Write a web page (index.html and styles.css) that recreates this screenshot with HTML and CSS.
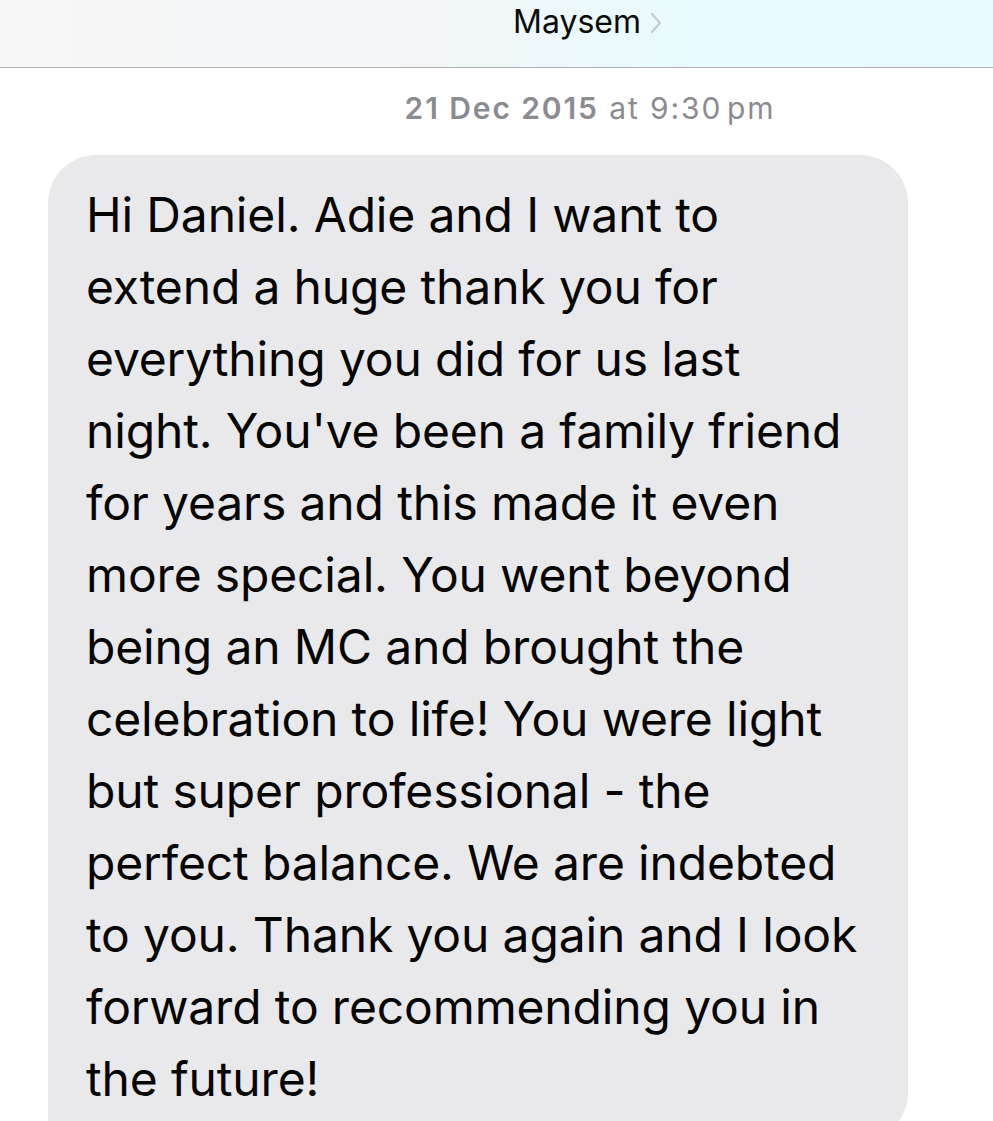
FILE: index.html
```html
<!DOCTYPE html>
<html>
<head>
<meta charset="utf-8">
<link rel="stylesheet" href="styles.css">
</head>
<body>
<header class="nav">
  <div class="contact">Maysem<svg class="chev" width="12" height="22" viewBox="0 0 12 22"><path d="M2 2 L10 11 L2 20" fill="none" stroke="#c4c8cc" stroke-width="2" stroke-linecap="round" stroke-linejoin="round"/></svg></div>
</header>
<main class="thread">
  <div class="stamp"><b>21 Dec 2015</b> at 9:30&#8202;pm</div>
  <div class="bubble"><p class="msg">Hi Daniel. Adie and I want to<br>extend a huge thank you for<br>everything you did for us last<br>night. You've been a family friend<br>for years and this made it even<br>more special. You went beyond<br>being an MC and brought the<br>celebration to life! You were light<br>but super professional - the<br>perfect balance. We are indebted<br>to you. Thank you again and I look<br>forward to recommending you in<br>the future!</p></div>
</main>
</body>
</html>
```
FILE: styles.css
```css
html, body {
  margin: 0;
  padding: 0;
  background: #ffffff;
  font-family: Inter, "Liberation Sans", sans-serif;
  overflow: hidden;
}
.nav {
  height: 68px;
  box-sizing: border-box;
  border-bottom: 1.5px solid #b3b3b3;
  background: linear-gradient(90deg, #f6f6f7 0%, #f3f5f6 40%, #e8fafd 70%, #e6fbfd 100%);
  display: flex;
  justify-content: center;
  padding-left: 182px;
}
.contact {
  display: flex;
  align-items: flex-start;
  gap: 9px;
  padding-top: 3px;
  font-size: 32px;
  color: #0b0b0b;
  line-height: 38px;
}
.chev {
  margin-top: 9px;
}
.thread {
  display: flex;
  flex-direction: column;
}
.stamp {
  align-self: center;
  margin-left: 187px;
  margin-top: 19px;
  font-size: 30px;
  line-height: 42px;
  letter-spacing: 1.9px;
  color: #8b8b90;
}
.stamp b {
  font-weight: 600;
}
.bubble {
  margin-top: 26px;
  margin-left: 48px;
  width: 860px;
  height: 986px;
  box-sizing: border-box;
  background: #e9e9eb;
  border-radius: 48px 48px 48px 12px;
  padding: 24px 0 0 38px;
}
.msg {
  margin: 0;
  font-size: 48px;
  line-height: 72px;
  letter-spacing: -0.15px;
  color: #050505;
}
```
